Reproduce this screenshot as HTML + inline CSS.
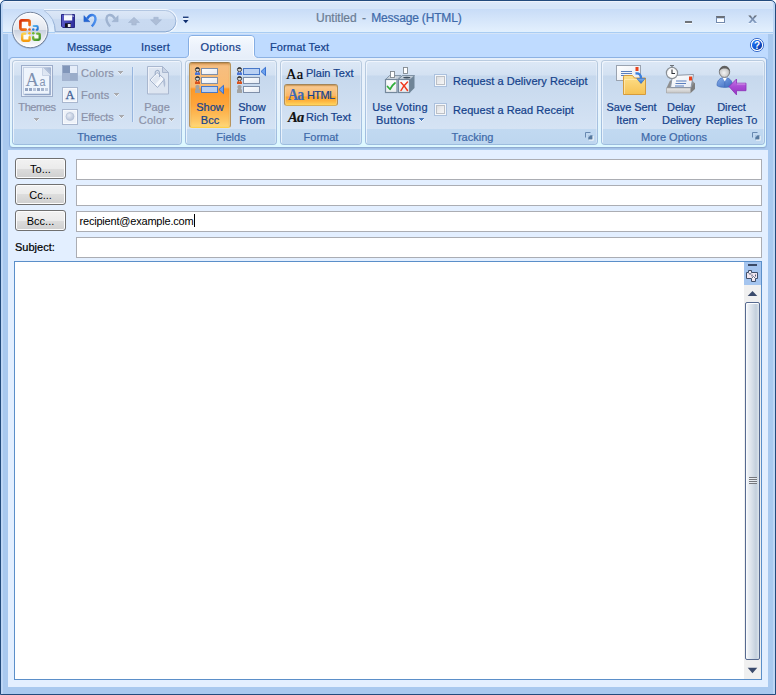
<!DOCTYPE html>
<html lang="en">
<head>
<meta charset="utf-8">
<title>Untitled - Message (HTML)</title>
<style>
*{box-sizing:border-box;margin:0;padding:0}
html,body{width:776px;height:695px;overflow:hidden;background:#fff}
body{font-family:"Liberation Sans",sans-serif;font-size:11px;color:#15428b;position:relative}
svg{position:absolute;overflow:visible}
#win{position:absolute;left:0;top:0;width:776px;height:695px;background:#a9c9ef;border-radius:5px 5px 0 0;overflow:hidden}
#frame{position:absolute;left:0;top:0;width:776px;height:695px;border:1px solid #234b7c;border-radius:5px 5px 0 0}
#hl{position:absolute;left:1px;top:1px;width:774px;height:693px;border-left:2px solid #bdd6f5;border-right:2px solid #bdd6f5;border-radius:4px 4px 0 0}
#titlebar{position:absolute;left:1px;top:1px;width:774px;height:33px;background:linear-gradient(#eef3fb 0,#eef3fb 1px,#dde9f8 1px,#dbe8f9 3px,#d7e6f8 4px,#d7e6f8 8px,#c8dcf7 8px,#e2effd 30px,#dff1ff 31px,#a9cdf3 31px,#a9cdf3 32px,#d5e4f7 32px,#d5e4f7 33px)}
#tabstrip{position:absolute;left:8px;top:34px;width:760px;height:25px;background:#bfdbff}
#title{position:absolute;left:316px;top:11px;font-size:12px;color:#3e6aaa;white-space:pre}
#title i{font-style:normal;display:inline-block;width:14.500px;text-align:center}
#title span{letter-spacing:-0.17px}
#title b{font-weight:normal;color:#6b7d94}
.tab{position:absolute;top:41px;font-size:11px;color:#15428b;white-space:nowrap}
#acttab{position:absolute;left:188px;top:36px;width:66px;height:23px;border:1px solid #8db2e3;border-bottom:none;border-radius:4px 4px 0 0;background:linear-gradient(#f4f9ff,#e1ecfa);box-shadow:inset 1px 1px 0 #fff,inset -1px 0 0 #fff}
#ribbon{position:absolute;left:9px;top:57px;width:758px;height:91px;border:1px solid #8db2e3;border-bottom-color:#8fabd1;border-radius:4px;background:linear-gradient(#e8f0fa 0,#e9f3fc 50px,#dcf8ff 89px);box-shadow:0 1px 0 #a3c0e6}
.grp{position:absolute;top:60px;height:85px;border:1px solid transparent;border-radius:4px;background:linear-gradient(#dde8f6 0,#d3e1f2 14px,#c6d8ed 15px,#d5e3f4 68px,#c1d9f1 68px,#bdd6ef 83px) padding-box,linear-gradient(#b9cbdf 0,#aec6e2 40px,#9dbcde 100%) border-box;box-shadow:inset 1px 1px 0 rgba(245,250,255,.75),inset -1px 0 0 rgba(245,250,255,.35)}
.grp .lbl{position:absolute;left:0;right:0;bottom:0;height:15px;line-height:16px;text-align:center;color:#3e6aaa;font-size:11px;white-space:nowrap}
.t{position:absolute;white-space:nowrap;font-size:11px;line-height:13px;color:#15428b}
.c{text-align:center;transform:translateX(-50%)}
.dis{color:#8b92a9}
#form{position:absolute;left:8px;top:150px;width:760px;height:537px;background:#e3efff}
.btn{position:absolute;left:15px;width:51px;height:21px;border:1px solid #707070;border-radius:3px;background:linear-gradient(#f2f2f2 0,#ebebeb 50%,#dddddd 50%,#cfcfcf 100%);color:#000;font-size:11px;text-align:center;line-height:20.500px;box-shadow:inset 0 0 0 1px #fcfcfc}
.inp{position:absolute;left:76px;width:686px;height:21px;border:1px solid #abadb3;background:#fff;color:#000;font-size:11px;line-height:19px;padding-left:2.500px;white-space:nowrap;letter-spacing:-0.2px}
.cb{position:absolute;width:13px;height:13px;border:1px solid #abc1de;background:linear-gradient(135deg,#d3d5d8 0,#e9eaec 45%,#fbfbfb 100%);box-shadow:inset 0 0 0 1px #f4f7fb, inset 0 0 0 2px #bcc0c6}
#body{position:absolute;left:14px;top:261px;width:748px;height:419px;border:1px solid #5b8fc9;background:#fff}
.t,.tab,.lbl,#title{-webkit-text-stroke:0.22px currentColor}
</style>
</head>
<body>
<div id="win">
  <div id="titlebar"></div>
  <div id="tabstrip"></div>
  <div id="hl"></div>
  <div id="title"><b>Untitled<i>-</i></b><span>Message (HTML)</span></div>

  <!--QAT-->
  <!-- Quick access toolbar -->
  <svg style="left:0;top:0" width="200" height="40" viewBox="0 0 200 40">
    <defs><linearGradient id="qg" x1="0" y1="10" x2="0" y2="31" gradientUnits="userSpaceOnUse"><stop offset="0" stop-color="#dde8f7"/><stop offset="0.4" stop-color="#d3e1f4"/><stop offset="0.45" stop-color="#c9daf1"/><stop offset="1" stop-color="#c8d9f0"/></linearGradient>
    <linearGradient id="qs" x1="0" y1="10" x2="0" y2="31" gradientUnits="userSpaceOnUse"><stop offset="0" stop-color="#b4c7e2"/><stop offset="1" stop-color="#86a6d0"/></linearGradient></defs>
    <path d="M44 9.500H165.200a11.650 11.650 0 0 1 0 23.300H55" fill="none" stroke="#f3f8fe" stroke-width="1.200" opacity=".95"/>
    <path d="M44 10.500H165.200a10.650 10.650 0 0 1 0 21.300H55.200A25 25 0 0 0 44 10.500Z" fill="url(#qg)" stroke="url(#qs)" stroke-width="1"/>
  </svg>
  <!-- save -->
  <svg style="left:61px;top:14px" width="14" height="14" viewBox="0 0 14 14">
    <defs><linearGradient id="sg" x1="0" y1="0" x2="1" y2="0"><stop offset="0" stop-color="#5a5ac8"/><stop offset="1" stop-color="#2e2e9c"/></linearGradient></defs>
    <path d="M0.500 0.500H13.500V13.500H1.800L0.500 12.200Z" fill="url(#sg)" stroke="#2a2a86"/>
    <path d="M3 0.800H11.200V6.600H3Z" fill="#f6f8fc"/>
    <path d="M3 0.800H11.200V2H3Z" fill="#d5dcef"/>
    <rect x="11.600" y="1.500" width="1" height="1.500" fill="#c8d0ea"/>
    <rect x="4" y="9.300" width="6" height="4.200" fill="#101018"/>
    <rect x="6.800" y="10" width="2.800" height="3" fill="#eeeef4"/>
  </svg>
  <!-- undo -->
  <svg style="left:83px;top:13px" width="14" height="14" viewBox="0 0 14 14">
    <defs><linearGradient id="ug" x1="0" y1="0" x2="1" y2="0"><stop offset="0" stop-color="#2467d6"/><stop offset="1" stop-color="#4f92ee"/></linearGradient></defs>
    <path d="M4.200 5.600C5.500 3.300 8 1.600 10.200 2.100C12.800 2.800 13 6.500 11.800 9C11 10.800 10 12.200 8.800 13.400" fill="none" stroke="url(#ug)" stroke-width="2.400"/>
    <path d="M0.900 2.600V8.700H7Z" fill="#2467d6" stroke="#1f55bb" stroke-width="0.400" stroke-linejoin="round"/>
  </svg>
  <!-- redo (disabled) -->
  <svg style="left:105px;top:13px" width="14" height="14" viewBox="0 0 14 14">
    <path d="M9.800 5.600C8.500 3.300 6 1.600 3.800 2.100C1.200 2.800 1 6.500 2.200 9C3 10.800 4 12.200 5.200 13.400" fill="none" stroke="#9fb3d0" stroke-width="2.400"/>
    <path d="M13.100 2.600V8.700H7Z" fill="#a4b7d2" stroke="#93a9c9" stroke-width="0.400" stroke-linejoin="round"/>
  </svg>
  <!-- up / down (disabled) -->
  <svg style="left:128px;top:17px" width="12" height="9" viewBox="0 0 12 9"><path d="M6 0.300L11.500 5.500H8.200V8H3.800V5.500H0.500Z" fill="#adbdd6" stroke="#9db0cc" stroke-width="0.500" stroke-linejoin="round"/></svg>
  <svg style="left:150px;top:17px" width="12" height="9" viewBox="0 0 12 9"><path d="M6 8.200L11.500 2.800H8.200V0.300H3.800V2.800H0.500Z" fill="#adbdd6" stroke="#9db0cc" stroke-width="0.500" stroke-linejoin="round"/></svg>
  <!-- customize -->
  <svg style="left:183px;top:16px" width="6" height="8" viewBox="0 0 6 8"><rect x="0" y="0.600" width="5.500" height="1.300" fill="#0f2f70"/><rect x="0" y="2.400" width="5.500" height="1" fill="#fff"/><path d="M0 4H5.500L2.750 7.200Z" fill="#0f2f70"/></svg>
  <!--/QAT-->
  <!--OFFICE-->
  <!-- Office button -->
  <svg style="left:10px;top:10px" width="40" height="40" viewBox="0 0 40 40">
    <defs>
      <radialGradient id="ob" cx="0.5" cy="0.25" r="0.8"><stop offset="0" stop-color="#ffffff"/><stop offset="0.55" stop-color="#eef1f6"/><stop offset="1" stop-color="#c9d2e0"/></radialGradient>
      <linearGradient id="ob2" x1="0" y1="0" x2="0" y2="1"><stop offset="0" stop-color="#fafbfd"/><stop offset="0.5" stop-color="#e2e6ee"/><stop offset="0.5" stop-color="#c8d0de"/><stop offset="0.75" stop-color="#e6eaf1"/><stop offset="1" stop-color="#ffffff"/></linearGradient>
      <linearGradient id="lr" x1="0" y1="0" x2="1" y2="1"><stop offset="0" stop-color="#d8300c"/><stop offset="1" stop-color="#f58a1a"/></linearGradient>
      <linearGradient id="ly" x1="0" y1="0" x2="0" y2="1"><stop offset="0" stop-color="#fdd24a"/><stop offset="1" stop-color="#f59c10"/></linearGradient>
      <linearGradient id="lg" x1="0" y1="0" x2="1" y2="1"><stop offset="0" stop-color="#8cc63c"/><stop offset="1" stop-color="#3f8f2a"/></linearGradient>
      <linearGradient id="lb" x1="0" y1="0" x2="1" y2="1"><stop offset="0" stop-color="#5ab4f0"/><stop offset="1" stop-color="#1f6fd0"/></linearGradient>
    </defs>
    <circle cx="20.200" cy="20.500" r="18.300" fill="#5d6f8c" opacity=".35"/>
    <circle cx="20.200" cy="20" r="17.700" fill="url(#ob2)" stroke="#74839c" stroke-width="1"/>
    <circle cx="20.200" cy="20" r="16.700" fill="none" stroke="#fff" stroke-width="0.800" opacity=".8"/>
    <rect x="11" y="11" width="8" height="8" fill="#fcfcfe"/><rect x="13" y="24.500" width="6" height="5.500" fill="#fdfcf6"/><rect x="24" y="24.500" width="5" height="4.500" fill="#f8fbf4"/>
    <path d="M15.700 19.600H11.900a1.500 1.500 0 0 1-1.500-1.500V11.900a1.500 1.500 0 0 1 1.500-1.500h6.200a1.500 1.500 0 0 1 1.500 1.500V15" fill="none" stroke="url(#lr)" stroke-width="2.700" stroke-linecap="round"/>
    <circle cx="19.500" cy="19.500" r="1.300" fill="#ee5a18"/>
    <path d="M23.600 16.100H26.700a1 1 0 0 1 1 1V19a.8.800 0 0 1-.8.800H26.600" fill="none" stroke="url(#lb)" stroke-width="2" stroke-linecap="round"/>
    <circle cx="23.300" cy="19.500" r="1.250" fill="#2a7ad8"/>
    <path d="M15.200 23.600H13.400a1.200 1.200 0 0 0-1.200 1.200v4.700a1.200 1.200 0 0 0 1.200 1.200h5a1.200 1.200 0 0 0 1.200-1.200V27.200" fill="none" stroke="url(#ly)" stroke-width="2.400" stroke-linecap="round"/>
    <circle cx="19.500" cy="23.300" r="1.300" fill="#fbb824"/>
    <path d="M23.200 27.200v1.300a1.200 1.200 0 0 0 1.200 1.200h4.100a1.200 1.200 0 0 0 1.200-1.200v-3.700a1.200 1.200 0 0 0-1.200-1.200H27.200" fill="none" stroke="url(#lg)" stroke-width="2.400" stroke-linecap="round"/>
    <circle cx="23.300" cy="23.300" r="1.250" fill="#6cb82e"/>
  </svg>
  <!--/OFFICE-->
  <!--WINCTL-->
  <!-- window controls + help -->
  <div style="position:absolute;left:685px;top:21px;width:7px;height:2px;background:#6f7379;box-shadow:0 1px 0 #f7fbff"></div>
  <div style="position:absolute;left:716px;top:16px;width:9px;height:7px;border:1px solid #7289ad;border-top:2px solid #6b7078;background:linear-gradient(#c9daf0 0,#c9daf0 1px,#fbfdff 1px);box-shadow:0 1px 0 #f7fbff"></div>
  <svg style="left:748px;top:15px" width="9.300" height="9" viewBox="0 0 10 9" preserveAspectRatio="none"><defs><linearGradient id="xg" x1="0" y1="0" x2="0" y2="1"><stop offset="0" stop-color="#5f6368"/><stop offset="0.35" stop-color="#7589a8"/><stop offset="1" stop-color="#86a0c6"/></linearGradient></defs><path d="M0.300 0.500H2.800L5 3L7.200 0.500H9.700L6.200 4.200L9.700 8H7.200L5 5.500L2.800 8H0.300L3.800 4.200Z" fill="url(#xg)"/><path d="M0.300 8.700H2.800M7.200 8.700H9.700" stroke="#f7fbff" stroke-width="0.800"/></svg>
  <svg style="left:750px;top:38px" width="14" height="14" viewBox="0 0 14 14">
    <defs><linearGradient id="hp" x1="0.1" y1="0.1" x2="0.9" y2="0.9"><stop offset="0" stop-color="#2b7af5"/><stop offset="0.5" stop-color="#1256d6"/><stop offset="1" stop-color="#0a369c"/></linearGradient></defs>
    <circle cx="7" cy="7" r="6.600" fill="#fff" stroke="#2c62c6" stroke-width="0.900"/>
    <circle cx="7" cy="7" r="5.100" fill="url(#hp)"/>
    <text x="7" y="10.600" text-anchor="middle" font-family="Liberation Sans,sans-serif" font-size="10" font-weight="bold" fill="#fff">?</text>
  </svg>
  <!--/WINCTL-->


  <div id="ribbon"></div>
  <svg style="left:0;top:0" width="300" height="60" viewBox="0 0 300 60">
    <defs><linearGradient id="tg" x1="0" y1="35" x2="0" y2="58" gradientUnits="userSpaceOnUse"><stop offset="0" stop-color="#f7fbff"/><stop offset="0.45" stop-color="#edf3fc"/><stop offset="1" stop-color="#e6eef9"/></linearGradient></defs>
    <path d="M184.500 58.500V57.500C187 57.500 188.500 56 188.500 54V39a3.500 3.500 0 0 1 3.500-3.500H251a3.500 3.500 0 0 1 3.500 3.500V54C254.500 56 256 57.500 258.500 57.500V58.500Z" fill="url(#tg)"/>
    <path d="M184.500 57.500C187 57.500 188.500 56 188.500 54V39a3.500 3.500 0 0 1 3.500-3.500H251a3.500 3.500 0 0 1 3.500 3.500V54C254.500 56 256 57.500 258.500 57.500" fill="none" stroke="#86aee3" stroke-width="1"/>
    <path d="M189.500 56V39.500a3 3 0 0 1 3-3H250.500a3 3 0 0 1 3 3V56" fill="none" stroke="#ffffff" stroke-width="1" opacity=".9"/>
  </svg>
  <div class="tab" style="left:67px">Message</div>
  <div class="tab" style="left:141px;letter-spacing:0.25px">Insert</div>
  <div class="tab" style="left:200.500px;letter-spacing:0.4px">Options</div>
  <div class="tab" style="left:270px;letter-spacing:0.12px">Format Text</div>

  <div class="grp" style="left:12px;width:170px"><div class="lbl">Themes</div></div>
  <div class="grp" style="left:185px;width:92px"><div class="lbl">Fields</div></div>
  <div class="grp" style="left:280px;width:82px"><div class="lbl">Format</div></div>
  <div class="grp" style="left:365px;width:233px"><div class="lbl" style="right:18px">Tracking</div></div>
  <div class="grp" style="left:601px;width:164px"><div class="lbl" style="right:18px">More Options</div></div>

  <!--THEMES-->
  <!-- Themes group content -->
  <svg style="left:21px;top:65px" width="32" height="32" viewBox="0 0 32 32">
    <defs><linearGradient id="fold" x1="0" y1="1" x2="1" y2="0"><stop offset="0" stop-color="#e2eaf5"/><stop offset="0.5" stop-color="#dbe4f1"/><stop offset="0.5" stop-color="#b9c6dc"/><stop offset="1" stop-color="#9db0cf"/></linearGradient></defs>
    <rect x="0.500" y="0.500" width="31" height="31" fill="#e9f0fa" stroke="#9dadca"/>
    <rect x="2.500" y="2.500" width="27" height="27" fill="#eef4fc" stroke="#c6d2e5"/>
    <path d="M29 3V29.500H3.500" fill="none" stroke="#8fa3c5" stroke-width="1.400"/>
    <path d="M21.500 2.500H29.500V10.500H21.500Z" fill="url(#fold)"/>
    <path d="M21.500 2.500V10.500H29.500" fill="none" stroke="#c0cce0" stroke-width="0.800"/>
    <text x="4.600" y="20.900" font-family="Liberation Serif,serif" font-size="19.500" fill="#7f91b0" textLength="13.200" lengthAdjust="spacingAndGlyphs">A</text>
    <text x="18.600" y="20.900" font-family="Liberation Sans,sans-serif" font-size="12.500" fill="#8495b3" textLength="6" lengthAdjust="spacingAndGlyphs">a</text>
    <g fill="#93a4c2"><rect x="4" y="23" width="3" height="3"/><rect x="8" y="23" width="3" height="3"/><rect x="12" y="23" width="3" height="3" fill="#b7c4da"/><rect x="16" y="23" width="3" height="3"/><rect x="20" y="23" width="3" height="3" fill="#a5b4ce"/><rect x="24" y="23" width="3" height="3" fill="#bdc9dd"/></g>
  </svg>
  <div class="t c dis" style="left:37px;top:101px;letter-spacing:-0.4px">Themes</div>
  <svg style="left:34px;top:118px" width="5" height="4" viewBox="0 0 5 4" shape-rendering="crispEdges"><path d="M0 1h1v1h1v1h1v1h-1v-1h-1v-1h-1zM4 1h1v1h-1v1h-1v-1h1z" fill="#e6eef8"/><path d="M0 0h5v1h-1v1h-1v1h-1v-1h-1v-1h-1z" fill="#a9aaae"/></svg>

  <svg style="left:62px;top:65px" width="16" height="16" viewBox="0 0 16 16">
    <rect width="8" height="8" fill="#8196b9"/><rect x="8" width="8" height="8" fill="#e5edf9"/>
    <rect y="8" width="8" height="8" fill="#a4b5d1"/><rect x="8" y="8" width="8" height="8" fill="#9aadca"/>
    <rect x="0.500" y="0.500" width="15" height="15" fill="none" stroke="#a3b3ce" stroke-opacity=".8"/>
  </svg>
  <div class="t dis" style="left:81px;top:67px;letter-spacing:0.2px">Colors</div>
  <svg style="left:118px;top:71px" width="5" height="4" viewBox="0 0 5 4" shape-rendering="crispEdges"><path d="M0 1h1v1h1v1h1v1h-1v-1h-1v-1h-1zM4 1h1v1h-1v1h-1v-1h1z" fill="#e6eef8"/><path d="M0 0h5v1h-1v1h-1v1h-1v-1h-1v-1h-1z" fill="#a9aaae"/></svg>

  <svg style="left:62px;top:87px" width="16" height="16" viewBox="0 0 16 16">
    <rect x="0.5" y="0.500" width="15" height="15" fill="#eef2f9" stroke="#a9b7cf"/>
    <rect x="1.5" y="1.500" width="13" height="13" fill="none" stroke="#f8fafd"/>
    <text x="8" y="12.300" text-anchor="middle" font-family="Liberation Serif,serif" font-size="12.500" fill="#3c5c93" stroke="#3c5c93" stroke-width="0.300">A</text>
  </svg>
  <div class="t dis" style="left:81px;top:89px;letter-spacing:0.2px">Fonts</div>
  <svg style="left:114px;top:93px" width="5" height="4" viewBox="0 0 5 4" shape-rendering="crispEdges"><path d="M0 1h1v1h1v1h1v1h-1v-1h-1v-1h-1zM4 1h1v1h-1v1h-1v-1h1z" fill="#e6eef8"/><path d="M0 0h5v1h-1v1h-1v1h-1v-1h-1v-1h-1z" fill="#a9aaae"/></svg>

  <svg style="left:62px;top:109px" width="16" height="16" viewBox="0 0 16 16">
    <defs><radialGradient id="efg" cx="0.4" cy="0.35" r="0.7"><stop offset="0" stop-color="#e8edf6"/><stop offset="1" stop-color="#b4c0d6"/></radialGradient></defs>
    <rect x="0.5" y="0.500" width="15" height="15" fill="#eef2f9" stroke="#a9b7cf"/>
    <rect x="1.5" y="1.500" width="13" height="13" fill="none" stroke="#f8fafd"/>
    <circle cx="8" cy="7.500" r="4" fill="url(#efg)" stroke="#b5c1d6" stroke-width="0.8"/>
  </svg>
  <div class="t dis" style="left:81px;top:111px;letter-spacing:-0.1px">Effects</div>
  <svg style="left:119px;top:115px" width="5" height="4" viewBox="0 0 5 4" shape-rendering="crispEdges"><path d="M0 1h1v1h1v1h1v1h-1v-1h-1v-1h-1zM4 1h1v1h-1v1h-1v-1h1z" fill="#e6eef8"/><path d="M0 0h5v1h-1v1h-1v1h-1v-1h-1v-1h-1z" fill="#a9aaae"/></svg>

  <div style="position:absolute;left:132px;top:67px;width:1px;height:55px;background:#96b5de"></div>
  <div style="position:absolute;left:133px;top:67px;width:1px;height:55px;background:#dde9f8"></div>

  <svg style="left:146px;top:65px" width="24" height="30" viewBox="0 0 24 30">
    <path d="M1.500 1.500H16.500L22.500 7.500V29H1.500Z" fill="#dde5f1" stroke="#a9b7cf"/>
    <path d="M2.500 28V2.500H16" fill="none" stroke="#eef2f9" stroke-width="1"/>
    <path d="M16.500 1.500V7.500H22.500Z" fill="#c9d3e4" stroke="#a9b7cf" stroke-linejoin="round"/>
    <path d="M4 15L11 7.500L18.500 14L11.500 22.500Z" fill="#f4f7fc" stroke="#a3b2cb" stroke-linejoin="round"/>
    <path d="M5.500 15L11 9.500L15 13L9 19.500Z" fill="#dfe6f1"/>
    <path d="M9.500 10c-1.500-5 4-6.500 4-1.500v3.500" fill="none" stroke="#9fafc9" stroke-width="1.100"/>
    <path d="M17.500 13c2.200 1.500 2 6.500 1.200 9.500c-1.200-2-1.800-5.500-1.200-9.500Z" fill="#aebcd4"/>
  </svg>
  <div class="t c dis" style="left:157px;top:101px">Page</div>
  <div class="t c dis" style="left:152.500px;top:114px;letter-spacing:0.25px">Color</div>
  <svg style="left:169px;top:118px" width="5" height="4" viewBox="0 0 5 4" shape-rendering="crispEdges"><path d="M0 1h1v1h1v1h1v1h-1v-1h-1v-1h-1zM4 1h1v1h-1v1h-1v-1h1z" fill="#e6eef8"/><path d="M0 0h5v1h-1v1h-1v1h-1v-1h-1v-1h-1z" fill="#a9aaae"/></svg>
  <!--/THEMES-->
  <!--FIELDS-->
  <!-- Fields group content -->
  <div style="position:absolute;left:189px;top:62px;width:42px;height:66px;border:1px solid #b8935a;border-top-color:#9a7b4c;border-bottom-color:#ffd048;border-radius:3px;background:linear-gradient(#eeb070 0,#f6be80 3px,#fabb72 24px,#fd9826 26px,#fda63c 42px,#fdc766 58px,#ffd878 64px);box-shadow:inset 0 1px 2px rgba(150,100,30,.5),inset 1px 0 0 rgba(255,225,160,.55),inset -1px 0 0 rgba(255,225,160,.55)"></div>
  <svg style="left:194px;top:66px" width="32" height="28" viewBox="0 0 32 28">
    <defs>
      <linearGradient id="bx" x1="0" y1="0" x2="1" y2="1"><stop offset="0" stop-color="#fff"/><stop offset="1" stop-color="#e3e9f3"/></linearGradient>
      
    </defs>
    <g transform="translate(1 1.200)" fill="#4a74d4"><path d="M0 7.700V6.200c0-2.200 5-2.200 5 0v1.500Z"/><circle cx="2.500" cy="2.400" r="2.100" fill="#cfcfcf" stroke="#3c3c3c" stroke-width="0.9"/><path d="M0.500 2.200a2 2 0 0 1 4 0c-1-.9-3-.9-4 0Z" fill="#2e2e2e"/><path d="M1.800 4.700l.7 1.200l.7-1.200Z" fill="#fff" opacity=".8"/></g><rect x="7.500" y="2.500" width="16" height="6" fill="url(#bx)" stroke="#7f8fa9"/>
    <g transform="translate(1 10.200)" fill="#d8521c"><path d="M0 7.700V6.200c0-2.200 5-2.200 5 0v1.500Z"/><circle cx="2.500" cy="2.400" r="2.100" fill="#cfcfcf" stroke="#3c3c3c" stroke-width="0.9"/><path d="M0.500 2.200a2 2 0 0 1 4 0c-1-.9-3-.9-4 0Z" fill="#2e2e2e"/><path d="M1.800 4.700l.7 1.200l.7-1.200Z" fill="#fff" opacity=".8"/></g><rect x="7.500" y="11.500" width="16" height="6" fill="url(#bx)" stroke="#7f8fa9"/>
    <path d="M1 27v-2.500c0-1 1-1.500 1-2c-1-1-1-3.500 1.500-3.500s2.500 2.500 1.500 3.500c0 .5 1 1 1 2V27Z" fill="#a3a3a3"/>
    <rect x="7.500" y="20.500" width="16" height="6" fill="#b9d0f3" stroke="#4878c8"/>
    <path d="M29.500 19.300v8.400l-4.500-4.200Z" fill="#6ea2ee" stroke="#2f6acc" stroke-width="0.9" stroke-linejoin="round"/>
  </svg>
  <div class="t c" style="left:210px;top:101px">Show</div>
  <div class="t c" style="left:210px;top:114px">Bcc</div>

  <svg style="left:236px;top:66px" width="32" height="28" viewBox="0 0 32 28">
    <g transform="translate(1 1.200)" fill="#4a74d4"><path d="M0 7.700V6.200c0-2.200 5-2.200 5 0v1.500Z"/><circle cx="2.500" cy="2.400" r="2.100" fill="#cfcfcf" stroke="#3c3c3c" stroke-width="0.9"/><path d="M0.500 2.200a2 2 0 0 1 4 0c-1-.9-3-.9-4 0Z" fill="#2e2e2e"/><path d="M1.800 4.700l.7 1.200l.7-1.200Z" fill="#fff" opacity=".8"/></g><rect x="7.500" y="2.500" width="16" height="6" fill="#b9d0f3" stroke="#4878c8"/>
    <path d="M29.500 1.300v8.400l-4.500-4.200Z" fill="#6ea2ee" stroke="#2f6acc" stroke-width="0.9" stroke-linejoin="round"/>
    <g transform="translate(1 10.200)" fill="#d8521c"><path d="M0 7.700V6.200c0-2.200 5-2.200 5 0v1.500Z"/><circle cx="2.500" cy="2.400" r="2.100" fill="#cfcfcf" stroke="#3c3c3c" stroke-width="0.9"/><path d="M0.500 2.200a2 2 0 0 1 4 0c-1-.9-3-.9-4 0Z" fill="#2e2e2e"/><path d="M1.800 4.700l.7 1.200l.7-1.200Z" fill="#fff" opacity=".8"/></g><rect x="7.500" y="11.500" width="16" height="6" fill="url(#bx)" stroke="#7f8fa9"/>
    <path d="M1 27v-2.500c0-1 1-1.500 1-2c-1-1-1-3.500 1.500-3.500s2.500 2.500 1.500 3.500c0 .5 1 1 1 2V27Z" fill="#a3a3a3"/>
    <rect x="7.500" y="20.500" width="16" height="6" fill="url(#bx)" stroke="#7f8fa9"/>
  </svg>
  <div class="t c" style="left:252px;top:101px">Show</div>
  <div class="t c" style="left:252px;top:114px">From</div>
  <!--/FIELDS-->
  <!--FORMAT-->
  <!-- Format group content -->
  <div class="t" style="left:286px;top:66px;font-family:'Liberation Serif',serif;font-size:14.500px;line-height:16px;color:#000;letter-spacing:0.3px">Aa</div>
  <div class="t" style="left:306px;top:67px">Plain Text</div>
  <div style="position:absolute;left:284px;top:84px;width:54px;height:22px;border:1px solid #b08f5c;border-top-color:#a3855a;border-bottom-color:#d9ae58;border-radius:3px;background:linear-gradient(#ecb67a 0,#f8c88f 2px,#fab766 11px,#fda226 12px,#fdb440 16px,#ffd660 20px);box-shadow:inset 0 1px 1px rgba(150,100,30,.35),inset 1px 0 0 rgba(255,225,160,.5),inset -1px 0 0 rgba(255,225,160,.5)"></div>
  <div class="t" style="left:287.500px;top:85.500px;font-family:'Liberation Serif',serif;font-size:16px;line-height:18px;font-weight:bold;color:#3c69b6;letter-spacing:-0.8px;transform:scaleX(.86);transform-origin:0 0">Aa</div>
  <div class="t" style="left:307px;top:89px;letter-spacing:-0.6px">HTML</div>
  <div class="t" style="left:288px;top:109px;font-family:'Liberation Serif',serif;font-size:14.5px;line-height:16px;font-weight:bold;font-style:italic;color:#111;letter-spacing:-0.6px">Aa</div>
  <div class="t" style="left:306px;top:111px">Rich Text</div>
  <!--/FORMAT-->
  <!--TRACKING-->
  <!-- Tracking group content -->
  <svg style="left:384px;top:66px" width="32" height="28" viewBox="0 0 32 28">
    <defs><linearGradient id="vb" x1="0" y1="0" x2="0" y2="1"><stop offset="0" stop-color="#fff"/><stop offset="1" stop-color="#e8ecf0"/></linearGradient></defs>
    <!-- right box -->
    <path d="M14.500 13.500L18.500 9.500H30.500V22L26 26.500Z" fill="#6f8497"/>
    <path d="M14.500 13.500L18.500 9.500H30.500L26 13.500Z" fill="#c3ced9" stroke="#74889c" stroke-width="0.800" stroke-linejoin="round"/>
    <ellipse cx="22.800" cy="11.600" rx="3.600" ry="0.900" fill="#3d4d5c"/>
    <rect x="14.500" y="13.500" width="11" height="13" fill="url(#vb)" stroke="#74889c" stroke-width="1.200"/>
    <rect x="19.500" y="1.500" width="4" height="6" fill="#fff" stroke="#81888f" stroke-width="0.900"/>
    <path d="M17 16.500c2 2 4.500 5 6.500 8M23.500 16c-2.500 2.500-5 5.500-6.500 8.500" stroke="#f0391c" stroke-width="1.500" fill="none" stroke-linecap="round"/>
    <!-- left box -->
    <path d="M1.500 13.500L5.500 9.500H17L13.500 13.500Z" fill="#c3ced9" stroke="#74889c" stroke-width="0.800" stroke-linejoin="round"/>
    <path d="M5.500 12h6.500" stroke="#dfe6ec" stroke-width="1.200"/>
    <rect x="1.500" y="13.500" width="11.500" height="13" fill="url(#vb)" stroke="#74889c" stroke-width="1.200"/>
    <rect x="6.500" y="5.500" width="4" height="6" fill="#fff" stroke="#81888f" stroke-width="0.900"/>
    <path d="M3.500 20.500l2.500 2.800c1.500-3 3-4.800 5-6.300" stroke="#2fae3a" stroke-width="1.700" fill="none" stroke-linecap="round" stroke-linejoin="round"/>
  </svg>
  <div class="t c" style="left:400px;top:101px;letter-spacing:0.25px">Use Voting</div>
  <div class="t c" style="left:395.500px;top:114px;letter-spacing:0.25px">Buttons</div>
  <svg style="left:419px;top:118px" width="5" height="4" viewBox="0 0 5 4" shape-rendering="crispEdges"><path d="M0 1h1v1h1v1h1v1h-1v-1h-1v-1h-1zM4 1h1v1h-1v1h-1v-1h1z" fill="#f2f7fd"/><path d="M0 0h5v1h-1v1h-1v1h-1v-1h-1v-1h-1z" fill="#4676ba"/></svg>
  <div class="cb" style="left:434px;top:74px"></div>
  <div class="t" style="left:453px;top:75px;letter-spacing:0.05px">Request a Delivery Receipt</div>
  <div class="cb" style="left:434px;top:103px"></div>
  <div class="t" style="left:453px;top:104px;letter-spacing:0.05px">Request a Read Receipt</div>
  <svg class="dl" style="left:585px;top:132px" width="9" height="9" viewBox="0 0 9 9"><path d="M5.500 0.500H0.500V5.500" fill="none" stroke="#6788b0"/><path d="M4 4h4.500v4.500H4Z" fill="#fff"/><path d="M3.300 3.300H7.500V7.500H3.300Z" fill="#55799f"/><path d="M3.300 3.300h2.200L3.300 5.500Z" fill="#c9dcf2"/></svg>
  <!--/TRACKING-->
  <!--MORE-->
  <!-- More Options group content -->
  <svg style="left:615px;top:64px" width="32" height="32" viewBox="0 0 32 32">
    <defs>
      <linearGradient id="fo" x1="0" y1="0" x2="0" y2="1"><stop offset="0" stop-color="#fde08d"/><stop offset="1" stop-color="#f6c253"/></linearGradient>
      <linearGradient id="env" x1="0" y1="0" x2="1" y2="1"><stop offset="0" stop-color="#ffffff"/><stop offset="1" stop-color="#e4e9f2"/></linearGradient>
      <linearGradient id="ba" x1="0" y1="0" x2="0" y2="1"><stop offset="0" stop-color="#7fb2ee"/><stop offset="1" stop-color="#2267c9"/></linearGradient>
    </defs>
    <rect x="1.500" y="1.500" width="24" height="15" fill="url(#env)" stroke="#9aa3b0"/>
    <rect x="20.500" y="3" width="3" height="4" fill="#e8421c"/>
    <path d="M6 7.500h11M6 9.500h11M6 11.500h9" stroke="#5b7fbd" stroke-width="1"/>
    <path d="M8.500 30.500V13c0-1 .5-1.500 1.500-1.500h7.500l2 2.500h11v16.500Z" fill="url(#fo)" stroke="#d59b3c" stroke-linejoin="round"/>
    <path d="M9.500 30V15.500h20" fill="none" stroke="#fff0c0" stroke-width="0.800" opacity=".8"/>
    <path d="M20.500 9.500c4-.5 5.500 1.500 5.500 5" fill="none" stroke="#3b7fdc" stroke-width="2.400"/>
    <path d="M21.800 14.500h8.400L26 19.500Z" fill="url(#ba)" stroke="#2a66c4" stroke-width="0.600" stroke-linejoin="round"/>
  </svg>
  <div class="t c" style="left:631.500px;top:101px;letter-spacing:-0.1px">Save Sent</div>
  <div class="t c" style="left:627px;top:114px">Item</div>
  <svg style="left:641px;top:118px" width="5" height="4" viewBox="0 0 5 4" shape-rendering="crispEdges"><path d="M0 1h1v1h1v1h1v1h-1v-1h-1v-1h-1zM4 1h1v1h-1v1h-1v-1h1z" fill="#f2f7fd"/><path d="M0 0h5v1h-1v1h-1v1h-1v-1h-1v-1h-1z" fill="#4676ba"/></svg>

  <svg style="left:665px;top:64px" width="32" height="32" viewBox="0 0 32 32">
    <defs>
      <linearGradient id="tr" x1="0" y1="0" x2="0" y2="1"><stop offset="0" stop-color="#e9e9e9"/><stop offset="1" stop-color="#c4c4c4"/></linearGradient>
    </defs>
    <!-- tray -->
    <path d="M1.500 24L5 16.500h22.500L30 20v5l-4.500 4H1.500Z" fill="#8f8f8f"/>
    <path d="M25.500 29l4.500-4.500v-6l-4.500 5.500Z" fill="#7d7d7d"/>
    <path d="M1.500 24h24v5h-24Z" fill="url(#tr)" stroke="#a6a6a6" stroke-width="0.600"/>
    <!-- envelope -->
    <path d="M7.500 11.500L28.500 10.500L26 23.500H5.500Z" fill="url(#env)" stroke="#8d97a6" stroke-linejoin="round"/>
    <path d="M24 12.500h3v4h-3Z" fill="#e8421c"/>
    <path d="M11 17h10.500M10.500 19.500h10.500M10 22h9" stroke="#5b7fbd" stroke-width="1"/>
    <!-- clock -->
    <path d="M5 1.500h4M7 1.500v2" stroke="#6d7278" stroke-width="1.200"/>
    <circle cx="7" cy="9" r="5.600" fill="#fdfdfd" stroke="#8a9096" stroke-width="1.200"/>
    <circle cx="7" cy="9" r="4.300" fill="none" stroke="#d4d8de" stroke-width="0.700" stroke-dasharray="0.7 1.550"/>
    <path d="M7 5.500V9.500H10" fill="none" stroke="#30343a" stroke-width="1.100"/>
  </svg>
  <div class="t c" style="left:681px;top:101px">Delay</div>
  <div class="t c" style="left:681.500px;top:114px;letter-spacing:-0.1px">Delivery</div>

  <svg style="left:715px;top:64px" width="32" height="32" viewBox="0 0 32 32">
    <defs>
      <linearGradient id="bd" x1="0" y1="0" x2="1" y2="1"><stop offset="0" stop-color="#86aeea"/><stop offset="1" stop-color="#3a68be"/></linearGradient>
      <radialGradient id="hd" cx="0.45" cy="0.6" r="0.6"><stop offset="0" stop-color="#f4f4f4"/><stop offset="0.7" stop-color="#c9c9c9"/><stop offset="1" stop-color="#8c8c8c"/></radialGradient>
      <linearGradient id="pa" x1="0" y1="0" x2="0" y2="1"><stop offset="0" stop-color="#c77be6"/><stop offset="0.5" stop-color="#a94ad4"/><stop offset="1" stop-color="#9236c0"/></linearGradient>
    </defs>
    <path d="M2 21.500c0-5 3-8 7.500-8s8 3 8 8c-2 2.500-13 2.500-15.500 0Z" fill="url(#bd)" stroke="#3f6ab8" stroke-width="0.700"/>
    <path d="M7.500 13.500l2.300 4l2.200-4Z" fill="#fff"/>
    <path d="M9.800 17.500V23" stroke="#3f6ab8" stroke-width="0.700"/>
    <ellipse cx="9.500" cy="7.800" rx="5.200" ry="5.600" fill="url(#hd)" stroke="#6b6b6b" stroke-width="0.800"/>
    <path d="M4.500 7c.5-4 3-5 5-5s5 1 5.200 5c-1.500-2-3-2.500-5-2.500s-4 .5-5.200 2.500Z" fill="#5f5f5f"/>
    <path d="M14 22.500L21.500 15v4.200h9.500v7.500h-9.500v4.200Z" fill="url(#pa)" stroke="#8d30b8" stroke-width="0.800" stroke-linejoin="round"/>
    <path d="M22 20h8.500" stroke="#e0b0f2" stroke-width="0.800" opacity=".9"/>
  </svg>
  <div class="t c" style="left:731.500px;top:101px">Direct</div>
  <div class="t c" style="left:731.500px;top:114px;letter-spacing:0.05px">Replies To</div>
  <svg class="dl" style="left:752px;top:132px" width="9" height="9" viewBox="0 0 9 9"><path d="M5.500 0.500H0.500V5.500" fill="none" stroke="#6788b0"/><path d="M4 4h4.500v4.500H4Z" fill="#fff"/><path d="M3.300 3.300H7.500V7.500H3.300Z" fill="#55799f"/><path d="M3.300 3.300h2.200L3.300 5.500Z" fill="#c9dcf2"/></svg>
  <!--/MORE-->

  <div id="form"></div>
  <div class="btn" style="top:158px">To...</div>
  <div class="btn" style="top:184px">Cc...</div>
  <div class="btn" style="top:210px">Bcc...</div>
  <div class="t" style="left:15px;top:241px;color:#000">Subject:</div>
  <div class="inp" style="top:159px"></div>
  <div class="inp" style="top:185px"></div>
  <div class="inp" style="top:211px">recipient@example.com<span style="display:inline-block;width:1px;height:13px;background:#000;vertical-align:-2px;margin-left:1px"></span></div>
  <div class="inp" style="top:237px"></div>
  <div id="body"></div>
  <!--SCROLL-->
  <!-- body scrollbar -->
  <div style="position:absolute;left:744px;top:262px;width:17px;height:417px;background:#f0f0f0"></div>
  <div style="position:absolute;left:744px;top:262px;width:17px;height:23px;background:#a5c5ef"></div>
  <div style="position:absolute;left:748px;top:264px;width:9px;height:2px;background:#3b4a66"></div>
  <svg style="left:746px;top:270px" width="13" height="12" viewBox="0 0 13 12">
    <path d="M0.500 2.500H2.500V0.500H5.500V2.500H11.500V8.500H9.500V11.500H5.500V8.500H0.500Z" fill="#f1e6ef" stroke="#3f4f6a" stroke-width="1" stroke-linejoin="round"/>
    <path d="M2.500 2.500L4 4.500L5.500 2.500M5.500 8.500L7.500 6.500L9.500 8.500" fill="#fff" stroke="#3f4f6a" stroke-width="0.800"/>
    <path d="M6 4.500v2M9.500 4.500v2" stroke="#3f4f6a" stroke-width="0.900"/>
  </svg>
  <svg style="left:747px;top:290px" width="11" height="7" viewBox="0 0 11 7"><path d="M5.500 1L10.300 6H0.700Z" fill="#3a4a6c"/></svg>
  <div style="position:absolute;left:745px;top:302px;width:15px;height:358px;border:1px solid #566a90;border-radius:2px;background:linear-gradient(90deg,#fdfeff 0,#ebeff4 2px,#d3dce6 7px,#c3cfdc 10px,#dde5ec 13px);box-shadow:inset 0 1px 0 #fff"></div>
  <div style="position:absolute;left:749px;top:477px;width:8px;height:7px;background:repeating-linear-gradient(#75777c 0,#75777c 1px,rgba(255,255,255,.45) 1px,rgba(255,255,255,.45) 2px)"></div>
  <svg style="left:747px;top:667px" width="11" height="7" viewBox="0 0 11 7"><path d="M0.700 0.800H10.300L5.500 6.200Z" fill="#3a4a6c"/></svg>
  <!--/SCROLL-->
  <div id="frame"></div>
</div>
</body>
</html>
